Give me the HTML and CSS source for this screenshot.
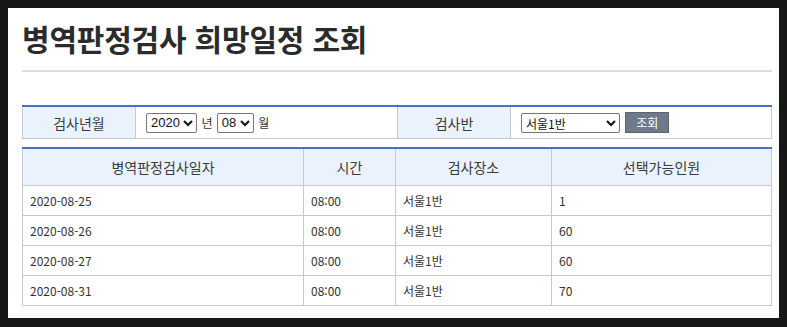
FILE: index.html
```html
<!DOCTYPE html>
<html lang="ko">

<head>
    <meta charset="UTF-8">
    <meta name="viewport" content="width=device-width, initial-scale=1.0">
    <title>병역판정검사 희망일정 조회</title>
    <link rel="stylesheet" href="styles.css">
</head>

<body>
    <div class="page">
        <h1 class="title">병역판정검사 희망일정 조회</h1>
        <hr class="divider">

        <table class="search">
            <tr>
                <th class="search-label">검사년월</th>
                <td class="search-value">
                    <select class="sel-year">
                        <option>2020</option>
                    </select>
                    <span class="unit">년</span>
                    <select class="sel-month">
                        <option>08</option>
                    </select>
                    <span class="unit">월</span>
                </td>
                <th class="search-label">검사반</th>
                <td class="search-value">
                    <select class="sel-team">
                        <option>서울1반</option>
                    </select>
                    <button class="btn-search">조회</button>
                </td>
            </tr>
        </table>

        <table class="list">
            <thead>
                <tr>
                    <th class="col-date">병역판정검사일자</th>
                    <th class="col-time">시간</th>
                    <th class="col-place">검사장소</th>
                    <th>선택가능인원</th>
                </tr>
            </thead>
            <tbody>
                <tr><td>2020-08-25</td><td>08:00</td><td>서울1반</td><td>1</td></tr>
                <tr><td>2020-08-26</td><td>08:00</td><td>서울1반</td><td>60</td></tr>
                <tr><td>2020-08-27</td><td>08:00</td><td>서울1반</td><td>60</td></tr>
                <tr><td>2020-08-31</td><td>08:00</td><td>서울1반</td><td>70</td></tr>
            </tbody>
        </table>
    </div>
</body>

</html>
```

FILE: styles.css
```css
body {
    margin: 0;
    padding: 8px 8px 9px;
    background: #171717;
    font-family: "Noto Sans CJK KR", "Noto Sans", sans-serif;
    color: #333;
}

.page {
    background: #fff;
    padding: 12px 7px 13px 14px;
    height: 285px;
}

.title {
    margin: 0;
    font-size: 30px;
    font-weight: bold;
    line-height: 36px;
    color: #2b2b2b;
    letter-spacing: -0.2px;
}

.divider {
    border: none;
    border-top: 2px solid #dcdcdc;
    margin: 14px 0 33px;
}

table {
    width: 100%;
    border-collapse: collapse;
    border-top: 2px solid #4472c4;
}

th,
td {
    border: 1px solid #c8c8c8;
}

th {
    background: #eaf2fd;
    font-weight: normal;
    font-size: 14px;
    color: #3a3a3a;
}

.search {
    margin-bottom: 8px;
}

.search th,
.search td {
    height: 31px;
    padding: 0;
}

.search-label {
    width: 112px;
}

.search-value {
    padding-left: 10px !important;
    font-size: 12px;
}

.search td:nth-of-type(1) {
    width: 251px;
}

select {
    height: 20px;
    font-family: "Liberation Sans", sans-serif;
    font-size: 13px;
    color: #111;
    border: 1px solid #767676;
    border-radius: 2px;
    background: #fff;
    padding: 0;
    vertical-align: middle;
}

.sel-team {
    width: 99px;
    font-family: "Noto Sans CJK KR", sans-serif;
    font-size: 12px;
}

.unit {
    vertical-align: middle;
    margin: 0 1px;
}

.btn-search {
    height: 21px;
    width: 44px;
    margin-left: 2px;
    border: 1px solid #5a6570;
    background: #6c7a89;
    color: #fff;
    font-family: "Noto Sans CJK KR", sans-serif;
    font-size: 12px;
    padding: 0;
    vertical-align: middle;
}

.list th {
    height: 36px;
    padding: 0;
}

.list td {
    height: 29px;
    padding: 0 0 0 7px;
    font-size: 12px;
    color: #333;
}

.col-date {
    width: 280px;
}

.col-time {
    width: 91px;
}

.col-place {
    width: 155px;
}
```
